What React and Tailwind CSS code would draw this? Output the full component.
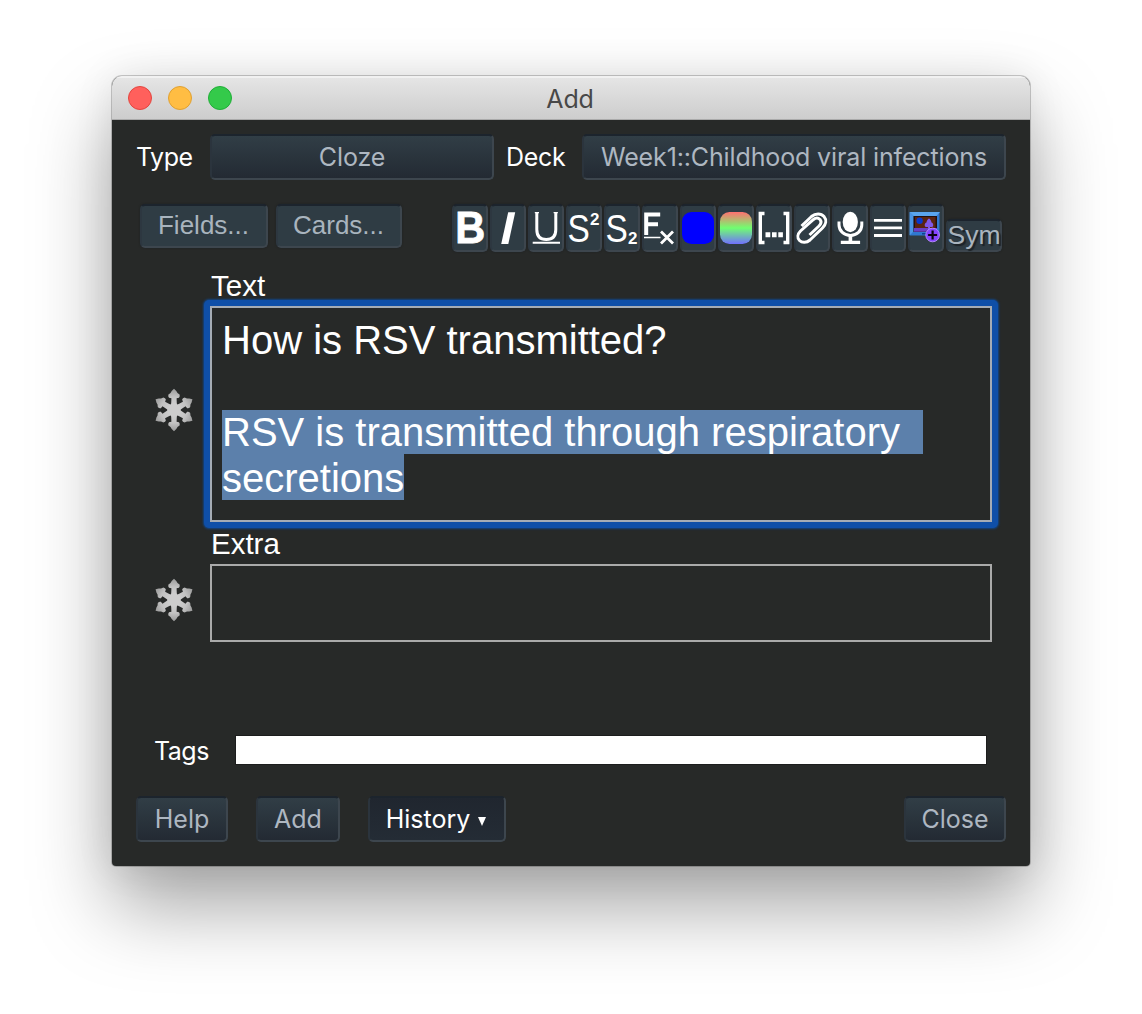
import React from "react";

const UI = "font-['Inter','Liberation_Sans',sans-serif]";
const ARIAL = "font-['Liberation_Sans',Arial,sans-serif]";

function Push({ className = "", active = false, children }) {
  const tone = active
    ? "bg-gradient-to-b from-[#20262f] to-[#242c35] text-white"
    : "bg-gradient-to-b from-[#313e46] to-[#232a33] text-[#aeb7c1]";
  return (
    <button
      className={`flex h-[46px] shrink-0 items-center justify-center whitespace-nowrap rounded-[5px] border-2 border-t-[#1c242d] border-r-[#3d464e] border-b-[#3d464e] border-l-[#2b343d] pt-[2px] text-[25px] ${UI} ${tone} ${className}`}
    >
      {children}
    </button>
  );
}

function Flat({ className = "", children }) {
  return (
    <button
      className={`flex shrink-0 items-center justify-center whitespace-nowrap rounded-[5px] border-2 border-t-[#1c242d] border-r-[#3d464e] border-b-[#3d464e] border-l-[#2d3740] bg-[#2f3c44] text-[#a9b4be] shadow-[0_0_2px_#1d2022] ${ARIAL} ${className}`}
    >
      {children}
    </button>
  );
}

function Tool({ children }) {
  return (
    <Flat className="h-[48px] w-[36px]">
      <svg width="32" height="32" viewBox="0 0 32 32" className="shrink-0 overflow-visible">
        {children}
      </svg>
    </Flat>
  );
}

const glyph = { fontFamily: "Liberation Sans, Arial, sans-serif", fill: "#fff" };

function Toolbar() {
  return (
    <div className="flex items-end gap-[2px]">
      <Tool>
        <text x="1.3" y="31.4" fontSize="44" fontWeight="700" textLength="30" lengthAdjust="spacingAndGlyphs" stroke="#fff" strokeWidth=".8" {...glyph}>B</text>
      </Tool>
      <Tool><path d="M16.2 0.3h7L16.3 32H9.2z" fill="#fff" /></Tool>
      <Tool>
        <path d="M6.8 0v17.5C6.8 24 10 27.5 16.3 27.5s9.500-3.500 9.500-10V0" fill="none" stroke="#fff" strokeWidth="3" />
        <path d="M4.800.6h4.200M23.600.6h4.200" stroke="#fff" strokeWidth="1.200" />
        <path d="M2.700 30.700h27.300" stroke="#fff" strokeWidth="2" />
      </Tool>
      <Tool>
        <text transform="translate(-.6 29.6) scale(.88 1)" fontSize="38" {...glyph}>S</text>
        <text x="22" y="12.500" fontSize="17" fontWeight="700" {...glyph}>2</text>
      </Tool>
      <Tool>
        <text transform="translate(-.6 29.6) scale(.88 1)" fontSize="38" {...glyph}>S</text>
        <text x="22" y="31.500" fontSize="17" fontWeight="700" {...glyph}>2</text>
      </Tool>
      <Tool>
        <path d="M2.200 23V2.600h14M2 12.300h12" fill="none" stroke="#fff" strokeWidth="4" />
        <path d="M0 25.500h16.500" stroke="#fff" strokeWidth="1.400" />
        <path d="M17 19.500l12 12M29 19.500l-12 12" stroke="#fff" strokeWidth="2.800" />
      </Tool>
      <Tool><rect width="32" height="32" rx="9.500" fill="#00f" /></Tool>
      <Tool>
        <defs>
          <linearGradient id="rainbow" x1="0" y1="0" x2="0" y2="1">
            <stop offset="0" stopColor="#ff7070" />
            <stop offset=".5" stopColor="#70ff70" />
            <stop offset="1" stopColor="#7070ff" />
          </linearGradient>
        </defs>
        <rect width="32" height="32" rx="9.500" fill="url(#rainbow)" />
      </Tool>
      <Tool>
        <path d="M6.500 1.500H2.300V30.500h4.200M25.500 1.500h4.200V30.500h-4.200" fill="none" stroke="#fff" strokeWidth="3.400" />
        <path d="M7.500 20.300h4.800v5H7.500zM14 20.300h4.600v5H14zM20.300 20.300h4.600v5h-4.600z" fill="#fff" />
      </Tool>
      <Tool>
        <path d="M5.500 14L15.500 4.500C19.500 1 25 1 28 4.500C31 8 30 12.500 26.500 16L14 28C10.500 31 6 31 3.500 28.500C1 26 1.500 22 4.500 19L17.500 7.500C20 5.500 22.500 6 24 7.500C25.500 9.500 25 12 23 14L13.500 23" fill="none" stroke="#fff" strokeWidth="3" />
      </Tool>
      <Tool>
        <ellipse cx="16.300" cy="10" rx="7.600" ry="10.200" fill="#fff" />
        <path d="M5 9.500v3.500a11.400 10.500 0 0 0 22.800 0V9.500" fill="none" stroke="#fff" strokeWidth="3" />
        <path d="M16.400 23v7" stroke="#fff" strokeWidth="3.600" />
        <path d="M6.800 30.300h19.300" stroke="#fff" strokeWidth="3.200" />
      </Tool>
      <Tool><path d="M2 8.300h28M2 15.800h28M2 23.500h28" stroke="#fff" strokeWidth="2.800" /></Tool>
      <Tool>
        <path d="M0 0h29.500v23.500H0z" fill="#2f78d0" />
        <path d="M-.5 0h30.500l-3.500 4H3.500z" fill="#5aa5ee" />
        <path d="M-.5 0L3.500 4v15.500L-.5 23.500z" fill="#4b96e6" />
        <path d="M3.500 4h23.500v16H3.500z" fill="#24100e" />
        <path d="M5 5h20.500v11H5z" fill="#5a2411" />
        <path d="M4 16h23v3.800H4z" fill="#6a3fc4" />
        <circle cx="9.600" cy="8.800" r="3.200" fill="#0838cc" />
        <path d="M18 15h-2c-2-.5-1.500-4 .5-4.500C16.800 8.500 17.800 7 19 6.500C20.200 7 21.200 8.500 21.500 10.500c2 .5 2.500 4 .5 4.500h-2v5h-2z" fill="#8058e8" />
        <path d="M12 21.700h5" stroke="#123f91" strokeWidth="1.500" />
        <circle cx="22.600" cy="23" r="6.800" fill="#8544ff" stroke="#b285ff" strokeWidth="1" />
        <path d="M18.100 23h9M22.600 18.500v9" stroke="#090313" strokeWidth="2.200" />
      </Tool>
      <Flat className="h-[33px] w-[56px] text-[26.5px] [text-shadow:2px_2px_1px_#1c2227]">
        <span className="pt-px">Sym</span>
      </Flat>
    </div>
  );
}

function Snowflake() {
  return (
    <svg width="44" height="44" viewBox="-22 -22 44 44" className="blur-[0.6px]">
      <defs>
        <radialGradient id="ice" gradientUnits="userSpaceOnUse" cx="0" cy="0" r="22">
          <stop offset="0" stopColor="#d4d4d4" />
          <stop offset=".6" stopColor="#c2c2c2" />
          <stop offset="1" stopColor="#969696" />
        </radialGradient>
      </defs>
      {[0, 60, 120, 180, 240, 300].map((a) => (
        <path
          key={a}
          transform={`rotate(${a})`}
          d="M-4 0L-2.800 -7L-2.600 -11.800L-5 -12.300Q-6.200 -13.500 -5.600 -15.500L-3.500 -17L-2.300 -19L0 -21.300L2.300 -19L3.500 -17L5.600 -15.500Q6.200 -13.500 5 -12.300L2.600 -11.800L2.800 -7L4 0z"
          fill="url(#ice)"
        />
      ))}
      <circle r="6.500" fill="#cdcdcd" />
    </svg>
  );
}

export default function App() {
  return (
    <div className="h-[1014px] w-[1142px] overflow-hidden bg-white pl-[112px] pt-[76px]">
      <div className="flex h-[790px] w-[918px] flex-col overflow-hidden rounded-t-[10px] rounded-b-[4px] bg-[#272928] shadow-[0_0_0_1px_rgba(0,0,0,0.2),0_40px_80px_rgba(0,0,0,0.36),0_0_40px_rgba(0,0,0,0.08)]">
        <header className="grid h-[44px] shrink-0 grid-cols-[1fr_auto_1fr] items-center border-b border-[#aaa] bg-gradient-to-b from-[#e6e6e6] to-[#cdcdcd] shadow-[inset_0_2px_0_#f1f1f1]">
          <div className="flex gap-[16px] pl-[16px]">
            <i className="size-[24px] rounded-full border border-[#e2463f] bg-[#ff605c]" />
            <i className="size-[24px] rounded-full border border-[#dfa032] bg-[#ffbd43]" />
            <i className="size-[24px] rounded-full border border-[#20ae38] bg-[#34ca4a]" />
          </div>
          <h1 className={`-ml-[2px] pt-[4px] text-[25px] tracking-[-0.2px] text-[#484848] ${UI}`}>Add</h1>
        </header>

        <div className={`mt-[14px] flex h-[46px] shrink-0 items-center text-[25px] text-white ${UI}`}>
          <span className="ml-[24px] w-[74px] pt-[2px] tracking-[-0.5px]">Type</span>
          <Push className="w-[284px] tracking-[-0.1px]">Cloze</Push>
          <span className="ml-[12px] w-[76px] pt-[2px] tracking-[-0.3px]">Deck</span>
          <Push className="w-[424px] tracking-[-0.13px]">Week1::Childhood viral infections</Push>
        </div>

        <div className="mt-[24px] flex h-[48px] shrink-0 items-start pl-[28px]">
          <div className="mr-[50px] flex gap-[8px] text-[26px] [text-shadow:2px_2px_1px_#1c2227]">
            <Flat className="h-[44px] w-[128px] pr-px pb-[2px]">Fields...</Flat>
            <Flat className="h-[44px] w-[126px] pr-px pb-[2px]">Cards...</Flat>
          </div>
          <Toolbar />
        </div>

        <div className={`ml-[99px] mt-[18px] h-[36px] shrink-0 text-[29.5px] leading-[32px] text-white ${ARIAL}`}>Text</div>
        <div className="flex h-[216px] shrink-0 items-center">
          <div className="flex w-[98px] justify-end pr-[14px] pb-[8px]"><Snowflake /></div>
          <div className="-m-[6px] rounded-[5px] bg-[#0f4fa8] p-[6px] shadow-[0_0_2px_1px_#124584]">
            <div className={`h-[216px] w-[782px] border-2 border-[#a5acb5] bg-[#272928] pl-[10px] pt-[9px] text-[40px] leading-[46px] text-white ${ARIAL}`}>
              <p>How is RSV transmitted?</p>
              <p className="h-[46px]" />
              <p className="flex h-[46px] items-start">
                <span className="mt-px h-[44px] w-[701px] whitespace-nowrap bg-[#5c80ab] leading-[44px]">RSV is transmitted through respiratory</span>
              </p>
              <p className="flex h-[46px] items-start">
                <span className="-mt-px h-[46px] bg-[#5c80ab] leading-[48px]">secretions</span>
              </p>
            </div>
          </div>
        </div>

        <div className={`ml-[99px] mt-[6px] h-[36px] shrink-0 text-[29.5px] leading-[32px] text-white ${ARIAL}`}>Extra</div>
        <div className="flex h-[78px] shrink-0 items-center">
          <div className="flex w-[98px] justify-end pr-[14px] pb-[6px]"><Snowflake /></div>
          <div className="h-[78px] w-[782px] border-2 border-[#aaa]" />
        </div>

        <div className={`mt-[94px] flex h-[28px] shrink-0 items-center pl-[42px] text-[25px] text-white ${UI}`}>
          <span className="w-[82px] pt-[4px] tracking-[-0.5px]">Tags</span>
          <div className="h-[28px] w-[750px] bg-white shadow-[0_0_0_1px_#1c1d1d]" />
        </div>

        <footer className="mt-[32px] flex shrink-0 pl-[24px] pr-[24px]">
          <Push className="w-[92px]">Help</Push>
          <Push className="ml-[28px] w-[84px]">Add</Push>
          <Push active className="ml-[28px] w-[138px] pr-[2px]">
            History
            <svg width="8" height="9" viewBox="0 0 8 9" className="ml-[8px] mt-[2px]"><path d="M0 0h8L4 9z" fill="#fff" /></svg>
          </Push>
          <Push className="ml-auto w-[102px]">Close</Push>
        </footer>
      </div>
    </div>
  );
}
